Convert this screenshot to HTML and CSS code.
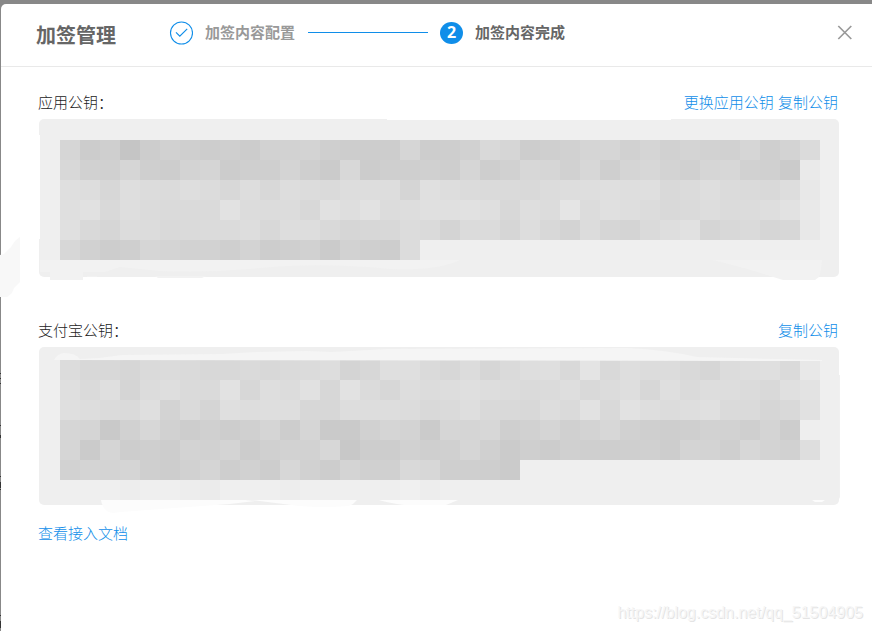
FILE: index.html
```html
<!DOCTYPE html>
<html lang="zh-CN">
<head>
    <meta charset="UTF-8">
    <meta name="viewport" content="width=device-width, initial-scale=1.0">
    <title>加签管理</title>
    <link rel="stylesheet" href="styles.css">
</head>
<body>
    <div class="modal">
        <div class="modal-header">
            <h1 class="modal-title">加签管理</h1>
            <div class="steps">
                <div class="step step-done">
                    <svg class="step-icon" width="24" height="24" viewBox="0 0 24 24" fill="none" stroke="#108ee9">
                        <circle cx="12.5" cy="12" r="11" stroke-width="1.1"/>
                        <path d="M7 11.3l3.8 3.8 7.4-7.2" stroke-width="1.2"/>
                    </svg>
                    <span class="step-title">加签内容配置</span>
                </div>
                <div class="step-line"></div>
                <div class="step step-active">
                    <span class="step-number">2</span>
                    <span class="step-title">加签内容完成</span>
                </div>
            </div>
            <svg class="close" width="16" height="16" viewBox="0 0 16 16" stroke="#999" stroke-width="1.7">
                <path d="M1.3 1l13 13M14.3 1l-13 13"/>
            </svg>
        </div>
        <div class="modal-body">
            <div class="key-header">
                <span>应用公钥：</span>
                <span class="links"><a href="#">更换应用公钥</a> <a href="#">复制公钥</a></span>
            </div>
            <div class="key-box key-app">
                <div class="mosaic" id="app-key"></div>
                <svg class="smudge" width="810" height="170" viewBox="0 0 810 170">
                    <path fill="#fff" d="M348 0h284v1H348zM0 16h1v104H0z"/>
                    <path fill="#f2f2f2" d="M1 141h420q-22 11-70 9-70-7-130-1-50 5-100 3l-40-4-15 5-65 0zM11 152h33v9H11zM48 157h10v1H48zM116 157h51l-4 2h-44zM674 141h109q-1 12-3 17l-4 3h-32l-13-4q-28-9-57-16z"/>
                </svg>
            </div>
            <div class="key-header">
                <span>支付宝公钥：</span>
                <span class="links"><a href="#">复制公钥</a></span>
            </div>
            <div class="key-box key-alipay">
                <div class="mosaic" id="alipay-key"></div>
                <svg class="smudge" width="810" height="170" viewBox="0 0 810 170">
                    <path fill="#f5f5f5" d="M15 13q3-6 10-7 12 0 16 6l19-1 23-3 100-1 35-2 50-1 25 1 55-3 240-1q40 2 70 9l80 2 45 1v1z"/>
                    <path fill="#fcfcfc" d="M62 153h144l10 1-25 3-69 5-40 3-8 1q-10-1-12-13zM213 153h105q-3 4-8 6-25 2-50 0zM340 153h79l-12 5h-42q-15-2-25-5zM773 153h13l-3 2h-7z"/>
                    <path fill="#f0f0f0" d="M800 28h1v122l-1 2z"/>
                </svg>
            </div>
            <a class="doc-link" href="#">查看接入文档</a>
        </div>
    </div>
    <svg class="edge" width="40" height="631" viewBox="0 0 40 631">
        <path fill="#f8f8f8" d="M0 255l4-1 7-7 4-6 5-4v45l-6 6-2 5-5 4H0z"/>
        <path stroke="#333" stroke-width="2" d="M0 373v1M0 378v1M0 383v1M0 425v1M0 435v3M0 476v1M0 482v6M0 489v1M0 615v1M0 621v7"/>
    </svg>
    <div class="watermark">https://blog.csdn.net/qq_51504905</div>

    <script>
        // Gray levels of the 20px blocks, two hex digits per block
        const appKey = [
            'd6cccfc5cdd1cfcdcfccd2d2d3cfcdcdcdd6cdced1d9d6cdcfd1d5d6d1d5d1d4d2d1d6cfd3db',
            'd8d1d0d6cfcdd3d5cccfcfd4cfcbd8cccfcfd0ced6ced1d7d6d1d7cfd5d7d3d0d6d7d1d0cbea',
            'dfddd7dedcdbdedcd8ddd8dddcdaddddddd5e0dddbdadad9dcdddedfdedfd9dbdedbdad9dde8',
            'dfe1d9dedbdadadae2dcdcdcd8e1dee2dcdde0e0e1dfd8dedce5dce0dedcd9dadddbdcdee2e9',
            'e0d9d6dcdcd9dadbdbddd8ddddd9d6d7d8dcdad4dbdbd6ddd8d3dcd6d4dadee1d5d8dad6d7e8',
            'd7d1cdcfd6d4d2d2cfd3cdcfd1cbd2cfcddc'
        ];
        const alipayKey = [
            'dcd8d8d6dadbdad8d8dad8dadbddd4d7dfdfdad7dcd6dadedfd9e4d9dedcdcd9d6dcdedfdae8',
            'dfdadfd5dcdedadae2d7dedce1d7e2dbd7dddcdddfdddcdadbded9dcded7dfdadddddbd9e0e3',
            'dfdddbdadfd3dad5dfdddeded7d7dddddddcd9daded9d9d8dddae2d9e2dedcdee0dadad6d9e1',
            'd6d5c9d1d7d1cdd0cdd0d5cdd6cacad1d5d3cbd6d5d7cfd1d5d0d3d7d1cfcecfd2d2cfd4cdee',
            'd6cbd5cdcfcdd3d1d4ccd0d2d2d7c8cdcdd1cfd0d6d0cbcfccd0cfcecfd0cdd4d3cfd7d3d1de',
            'd2d4d3d5cfcdd1d5ced1cdd7d1cdd4d0d0d9d7cfcfcecb',
            'efefefedefefedebefefefedefefefefeef0edef'
        ];

        function renderMosaic(id, rows) {
            const container = document.getElementById(id);
            rows.forEach(levels => {
                const row = document.createElement('div');
                row.className = 'mosaic-row';
                levels.match(/../g).forEach(level => {
                    const block = document.createElement('div');
                    block.className = 'block';
                    block.style.backgroundColor = `#${level}${level}${level}`;
                    row.appendChild(block);
                });
                container.appendChild(row);
            });
        }

        renderMosaic('app-key', appKey);
        renderMosaic('alipay-key', alipayKey);
    </script>
</body>
</html>
```
FILE: styles.css
```css
* {
    box-sizing: border-box;
}
body {
    margin: 0;
    height: 631px;
    padding: 4px 0 0 1px;
    overflow: hidden;
    background-color: #888;
    font-family: "Noto Sans CJK SC", sans-serif;
    font-size: 15px;
    font-weight: 300;
    color: #222;
}
a {
    color: #108ee9;
    text-decoration: none;
}
.modal {
    height: 627px;
    background-color: #fff;
    border-radius: 5px 0 0 0;
}
.modal-header {
    display: flex;
    align-items: center;
    height: 63px;
    padding: 0 19px 5px 35px;
    border-bottom: 1px solid #e9e9e9;
}
.modal-title {
    width: 133px;
    margin: 4px 0 0;
    font-size: 20px;
    line-height: 30px;
    color: #666;
}
.steps {
    display: flex;
    align-items: center;
    flex: 1;
}
.step {
    display: flex;
    align-items: center;
    font-weight: bold;
    line-height: 24px;
}
.step-icon {
    margin-right: 12px;
}
.step-title {
    margin-top: -2px;
}
.step-done {
    color: #999;
}
.step-active {
    color: #666;
}
.step-line {
    width: 120px;
    height: 1px;
    margin: 0 12px 0 13px;
    background-color: #108ee9;
}
.step-number {
    width: 23px;
    height: 22px;
    margin-right: 12px;
    border-radius: 50%;
    background-color: #108ee9;
    color: #fff;
    font-family: "Open Sans", sans-serif;
    font-size: 16px;
    line-height: 20px;
    text-align: center;
}
.modal-body {
    padding: 24px 33px 0 37px;
}
.key-header {
    display: flex;
    justify-content: space-between;
    height: 28px;
    padding-right: 1px;
    line-height: 22px;
}
.links {
    word-spacing: 1px;
}
.key-box {
    position: relative;
    height: 158px;
    margin-left: 1px;
    border-radius: 5px;
    background-color: #efefef;
}
.key-app {
    margin-bottom: 42px;
    padding: 21px 0 0 21px;
}
.key-alipay {
    padding: 13px 0 0 21px;
}
.mosaic-row {
    display: flex;
}
.block {
    width: 20px;
    height: 20px;
}
.smudge {
    position: absolute;
    top: 0;
    left: 0;
}
.doc-link {
    display: inline-block;
    margin-top: 17px;
    line-height: 22px;
}
.edge {
    position: absolute;
    top: 0;
    left: 0;
}
.watermark {
    position: absolute;
    right: 9px;
    bottom: 9px;
    font-family: "Liberation Sans", sans-serif;
    font-size: 16px;
    font-weight: normal;
    line-height: 18px;
    color: #f6f6f6;
    text-shadow: 1px 1px 0 #e4e4e4;
}
```
